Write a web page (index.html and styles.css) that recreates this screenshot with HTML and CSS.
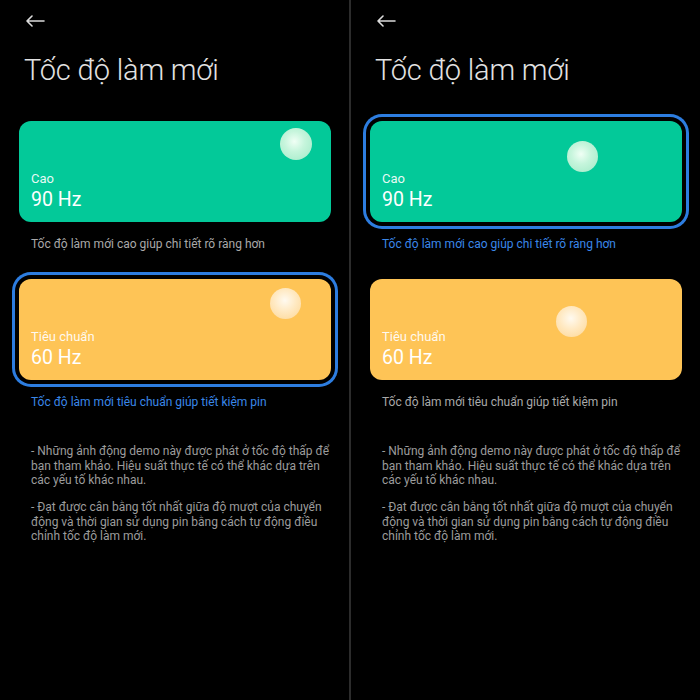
FILE: index.html
```html
<!DOCTYPE html>
<html lang="vi">
<head>
<meta charset="utf-8">
<link rel="stylesheet" href="styles.css">
</head>
<body>
<div class="screen">
  <section class="panel">
    <div class="topbar">
      <svg class="back" width="20" height="12" viewBox="0 0 20 12"><path d="M19 6H2M7 1L2 6l5 5" fill="none" stroke="#dcdcdc" stroke-width="1.6" stroke-linecap="round" stroke-linejoin="round"/></svg>
    </div>
    <h1 class="title">Tốc độ làm mới</h1>
    <div class="option">
      <div class="card green">
        <span class="ball ball-green b1"></span>
        <span class="label">Cao</span>
        <span class="value">90 Hz</span>
      </div>
      <p class="desc">Tốc độ làm mới cao giúp chi tiết rõ ràng hơn</p>
    </div>
    <div class="option">
      <div class="card yellow selected">
        <span class="ball ball-yellow b2"></span>
        <span class="label">Tiêu chuẩn</span>
        <span class="value">60 Hz</span>
      </div>
      <p class="desc active">Tốc độ làm mới tiêu chuẩn giúp tiết kiệm pin</p>
    </div>
    <div class="notes">
      <p>- Những ảnh động demo này được phát ở tốc độ thấp để bạn tham khảo. Hiệu suất thực tế có thể khác dựa trên các yếu tố khác nhau.</p>
      <p>- Đạt được cân bằng tốt nhất giữa độ mượt của chuyển động và thời gian sử dụng pin bằng cách tự động điều chỉnh tốc độ làm mới.</p>
    </div>
  </section>
  <div class="divider"></div>
  <section class="panel">
    <div class="topbar">
      <svg class="back" width="20" height="12" viewBox="0 0 20 12"><path d="M19 6H2M7 1L2 6l5 5" fill="none" stroke="#dcdcdc" stroke-width="1.6" stroke-linecap="round" stroke-linejoin="round"/></svg>
    </div>
    <h1 class="title">Tốc độ làm mới</h1>
    <div class="option">
      <div class="card green selected">
        <span class="ball ball-green b3"></span>
        <span class="label">Cao</span>
        <span class="value">90 Hz</span>
      </div>
      <p class="desc active">Tốc độ làm mới cao giúp chi tiết rõ ràng hơn</p>
    </div>
    <div class="option">
      <div class="card yellow">
        <span class="ball ball-yellow b4"></span>
        <span class="label">Tiêu chuẩn</span>
        <span class="value">60 Hz</span>
      </div>
      <p class="desc">Tốc độ làm mới tiêu chuẩn giúp tiết kiệm pin</p>
    </div>
    <div class="notes">
      <p>- Những ảnh động demo này được phát ở tốc độ thấp để bạn tham khảo. Hiệu suất thực tế có thể khác dựa trên các yếu tố khác nhau.</p>
      <p>- Đạt được cân bằng tốt nhất giữa độ mượt của chuyển động và thời gian sử dụng pin bằng cách tự động điều chỉnh tốc độ làm mới.</p>
    </div>
  </section>
</div>
</body>
</html>
```
FILE: styles.css
```css
html, body {
  margin: 0;
  padding: 0;
  background: #000;
}
body {
  font-family: Roboto, "Noto Sans", sans-serif;
  color: #e4e4e4;
}
.screen {
  display: flex;
  width: 700px;
  height: 700px;
  background: #000;
}
.panel {
  width: 349px;
  flex: none;
  display: flex;
  flex-direction: column;
}
.divider {
  width: 2px;
  flex: none;
  background: #2c2c2c;
}
.topbar {
  height: 41px;
  display: flex;
  align-items: center;
  padding-left: 25px;
}
.back {
  display: block;
}
.title {
  margin: 12px 0 0 24px;
  font-size: 29px;
  line-height: 34px;
  font-weight: 300;
  color: #e2e2e2;
  letter-spacing: -0.2px;
}
.option {
  display: flex;
  flex-direction: column;
  padding-left: 19px;
}
.title + .option {
  margin-top: 34px;
}
.option + .option {
  margin-top: 27px;
}
.card {
  position: relative;
  width: 312px;
  height: 101px;
  border-radius: 12px;
  box-sizing: border-box;
  padding: 0 12px 11px;
  display: flex;
  flex-direction: column;
  justify-content: flex-end;
  color: #fff;
}
.card.green {
  background: #03c999;
}
.card.yellow {
  background: #fec456;
}
.card.selected {
  box-shadow: 0 0 0 4px #000, 0 0 0 7px #2d7de0;
}
.label {
  font-size: 13px;
  line-height: 16px;
  color: rgba(255, 255, 255, 0.92);
}
.value {
  margin-top: 2px;
  font-size: 19.5px;
  line-height: 22px;
  color: #fff;
}
.ball {
  position: absolute;
  width: 31px;
  height: 31px;
  border-radius: 50%;
}
.ball-green {
  background: radial-gradient(circle at 45% 42%, #f0fff5 0%, #c6f5dc 40%, #9fe9c6 100%);
}
.ball-yellow {
  background: radial-gradient(circle at 48% 40%, #fffaf0 0%, #ffe9c2 45%, #fdd692 100%);
}
.b1 { left: 261px; top: 7px; width: 32px; height: 32px; }
.b2 { left: 251px; top: 9px; }
.b3 { left: 197px; top: 20px; }
.b4 { left: 186px; top: 27px; }
.desc {
  margin: 14px 0 0 12px;
  font-size: 12px;
  line-height: 16px;
  color: #a9a9a9;
}
.desc.active {
  color: #3a87e8;
}
.notes {
  margin: 34px 0 0 31px;
  width: 305px;
  font-size: 12px;
  line-height: 14.5px;
  color: #9c9c9c;
}
.notes p {
  margin: 0 0 12.5px;
}
```
